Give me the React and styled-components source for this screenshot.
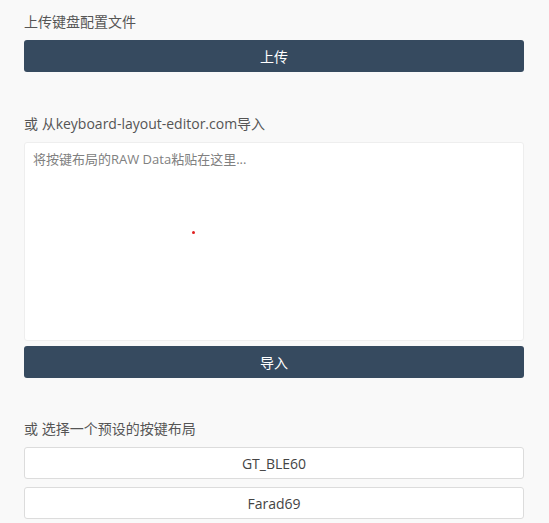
import React from 'react';
import styled, { createGlobalStyle } from 'styled-components';

const GlobalStyle = createGlobalStyle`
  body {
    margin: 0;
    background: #f9f9f9;
    font-family: "Open Sans", "Noto Sans CJK SC", sans-serif;
  }
`;

const Page = styled.div`
  width: 500px;
  padding: 12px 24px 0;
  display: flex;
  flex-direction: column;
`;

const Section = styled.section`
  display: flex;
  flex-direction: column;
  margin-bottom: ${({ gap }) => gap || 0}px;
`;

const Label = styled.div`
  font-size: 14px;
  line-height: 20px;
  color: #555;
  margin-bottom: 8px;
`;

const DarkButton = styled.button`
  height: 32px;
  width: 100%;
  border: none;
  border-radius: 3px;
  background: #364a5f;
  color: #fff;
  font-family: inherit;
  font-size: 14px;
  cursor: pointer;
`;

const PresetButton = styled.button`
  height: 32px;
  width: 100%;
  border: 1px solid #dcdcdc;
  border-radius: 3px;
  background: #fff;
  color: #444;
  font-family: inherit;
  font-size: 14px;
  margin-bottom: 8px;
  cursor: pointer;
`;

const AreaWrap = styled.div`
  position: relative;
  margin-bottom: 5px;
`;

const RawArea = styled.textarea`
  display: block;
  box-sizing: border-box;
  width: 100%;
  height: 199px;
  padding: 6px 8px;
  border: 1px solid #eeeeee;
  border-radius: 3px;
  background: #fff;
  font-family: inherit;
  font-size: 13px;
  line-height: 20px;
  color: #333;
  resize: none;
  outline: none;

  &::placeholder {
    color: #808080;
  }
`;

const Dot = styled.span`
  position: absolute;
  left: 168px;
  top: 89px;
  width: 3px;
  height: 3px;
  border-radius: 50%;
  background: #e02020;
`;

const presets = ['GT_BLE60', 'Farad69'];

export default function App() {
  return (
    <>
      <GlobalStyle />
      <Page>
        <Section gap={42}>
          <Label>上传键盘配置文件</Label>
          <DarkButton>上传</DarkButton>
        </Section>
        <Section gap={41}>
          <Label>或 从keyboard-layout-editor.com导入</Label>
          <AreaWrap>
            <RawArea placeholder="将按键布局的RAW Data粘贴在这里..." />
            <Dot />
          </AreaWrap>
          <DarkButton>导入</DarkButton>
        </Section>
        <Section>
          <Label>或 选择一个预设的按键布局</Label>
          {presets.map((name) => (
            <PresetButton key={name}>{name}</PresetButton>
          ))}
        </Section>
      </Page>
    </>
  );
}
